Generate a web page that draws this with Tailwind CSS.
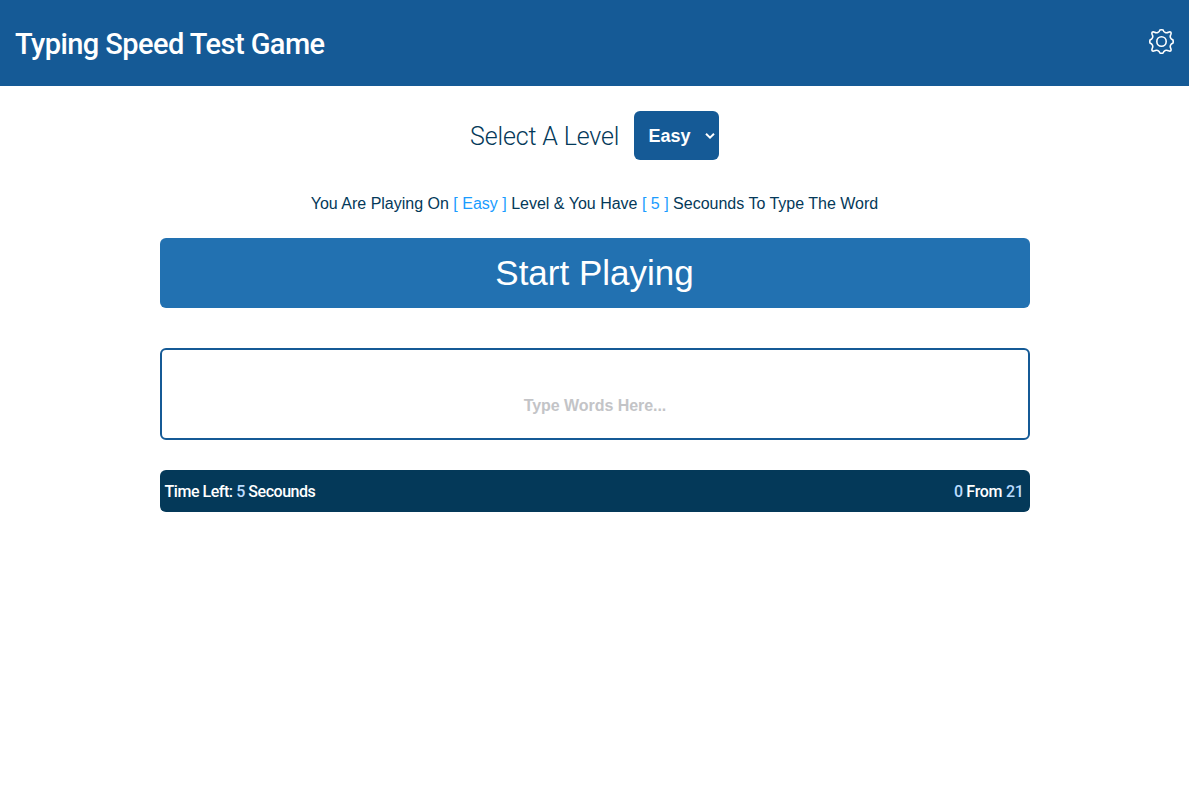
<!DOCTYPE html>
<html lang="en">
<head>
<meta charset="utf-8">
<title>Typing Speed Test Game</title>
<script src="https://cdn.jsdelivr.net/npm/@tailwindcss/browser@4"></script>
</head>
<body class="min-h-screen bg-white font-['Liberation_Sans',sans-serif] text-[#043959]">
<header class="flex h-[86px] items-center justify-between bg-[#155a96] px-[15px] text-white">
  <h1 class="whitespace-nowrap pt-[3px] font-['Roboto',sans-serif] text-[29px] font-medium tracking-[-0.56px]">Typing Speed Test Game</h1>
  <svg class="mb-[3px] size-[25px]" viewBox="-12.5 -12.5 25 25" fill="none" stroke="currentColor" stroke-width="1.6" stroke-linejoin="round">
    <path d="M-1.63 -11.4Q0 -12 1.63 -11.4A3.5 3.5 0 0 0 6.9 -9.3Q8.6 -9.9 9.3 -9.3Q9.9 -8.6 9.3 -6.9A3.5 3.5 0 0 0 11.4 -1.63Q12 0 11.4 1.63A3.5 3.5 0 0 0 9.3 6.9Q9.9 8.6 9.3 9.3Q8.6 9.9 6.9 9.3A3.5 3.5 0 0 0 1.63 11.4Q0 12 -1.63 11.4A3.5 3.5 0 0 0 -6.9 9.3Q-8.6 9.9 -9.3 9.3Q-9.9 8.6 -9.3 6.9A3.5 3.5 0 0 0 -11.4 1.63Q-12 0 -11.4 -1.63A3.5 3.5 0 0 0 -9.3 -6.9Q-9.9 -8.6 -9.3 -9.3Q-8.6 -9.9 -6.9 -9.3A3.5 3.5 0 0 0 -1.63 -11.4Z"/>
    <circle r="4.7"/>
  </svg>
</header>
<main class="mx-auto flex w-[870px] flex-col pt-[25px]">
  <div class="flex h-[49px] items-center justify-center gap-[15px]">
    <span class="w-[149px] whitespace-nowrap pt-[2px] font-['Roboto',sans-serif] text-[25px] font-light tracking-[-0.15px]">Select A Level</span>
    <button class="flex h-[49px] w-[85px] items-center justify-between rounded-md bg-[#155a96] pl-[14.5px] pr-[4px] text-[18px] font-bold text-white"><span class="pt-[2px]">Easy</span>
      <svg class="h-[6px] w-[10px]" viewBox="0 0 10 6" fill="none" stroke="currentColor" stroke-width="2"><path d="M1 .8 5 4.6 9 .8"/></svg>
    </button>
  </div>
  <p class="mt-8 h-6 whitespace-nowrap text-center text-base leading-6">You Are Playing On <span class="text-[#1a9cff]">[ Easy ]</span> Level &amp; You Have <span class="text-[#1a9cff]">[ 5 ]</span> Secounds To Type The Word</p>
  <button class="mt-[22px] h-[70px] rounded-md bg-[#2271b1] text-[35px] text-white">Start Playing</button>
  <div class="mt-10 flex h-[92px] items-end justify-center rounded-md border-2 border-[#155a96] pb-5 pl-px text-base font-bold leading-6 tracking-[-0.05px] text-[#c3c4c7]">Type Words Here...</div>
  <div class="mt-[30px] flex h-[42px] items-center justify-between whitespace-nowrap rounded-md bg-[#043959] pt-[2px] pl-[5px] pr-[6px] font-['Roboto',sans-serif] text-base font-medium text-white">
    <span class="tracking-[-0.46px]">Time Left: <span class="text-[#b9dcff]">5</span> Secounds</span>
    <span class="tracking-[-0.3px]"><span class="text-[#b9dcff]">0</span> From <span class="text-[#b9dcff]">21</span></span>
  </div>
</main>
</body>
</html>
